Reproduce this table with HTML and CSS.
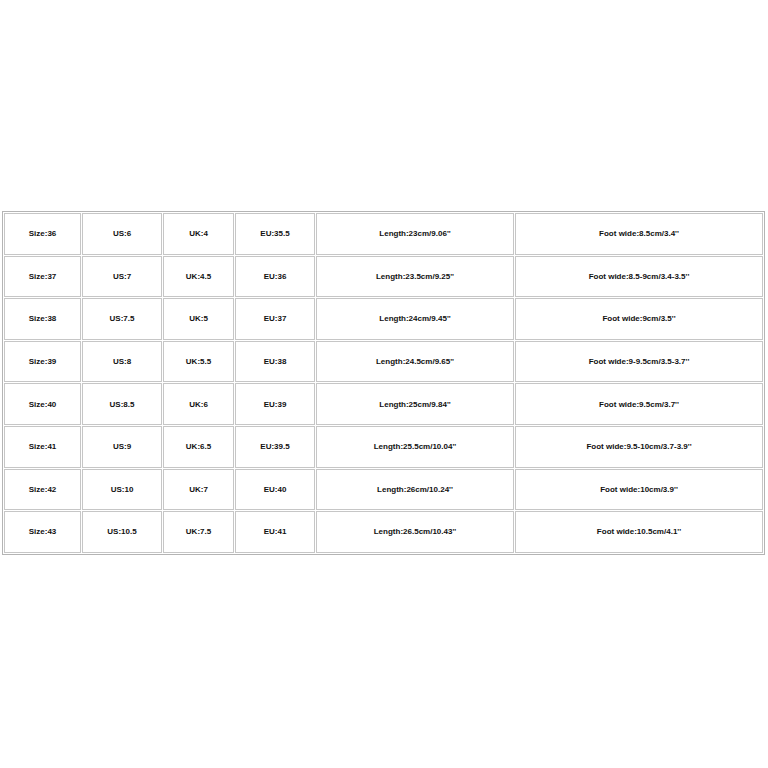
FILE: index.html
```html
<!DOCTYPE html>
<html>
<head>
<meta charset="utf-8">
<link rel="stylesheet" href="styles.css">
</head>
<body>
<table class="size-chart">
<tbody>
<tr><td class="c1">Size:36</td><td class="c2">US:6</td><td class="c3">UK:4</td><td class="c4">EU:35.5</td><td class="c5">Length:23cm/9.06''</td><td class="c6">Foot wide:8.5cm/3.4''</td></tr>
<tr><td class="c1">Size:37</td><td class="c2">US:7</td><td class="c3">UK:4.5</td><td class="c4">EU:36</td><td class="c5">Length:23.5cm/9.25''</td><td class="c6">Foot wide:8.5-9cm/3.4-3.5''</td></tr>
<tr><td class="c1">Size:38</td><td class="c2">US:7.5</td><td class="c3">UK:5</td><td class="c4">EU:37</td><td class="c5">Length:24cm/9.45''</td><td class="c6">Foot wide:9cm/3.5''</td></tr>
<tr><td class="c1">Size:39</td><td class="c2">US:8</td><td class="c3">UK:5.5</td><td class="c4">EU:38</td><td class="c5">Length:24.5cm/9.65''</td><td class="c6">Foot wide:9-9.5cm/3.5-3.7''</td></tr>
<tr><td class="c1">Size:40</td><td class="c2">US:8.5</td><td class="c3">UK:6</td><td class="c4">EU:39</td><td class="c5">Length:25cm/9.84''</td><td class="c6">Foot wide:9.5cm/3.7''</td></tr>
<tr><td class="c1">Size:41</td><td class="c2">US:9</td><td class="c3">UK:6.5</td><td class="c4">EU:39.5</td><td class="c5">Length:25.5cm/10.04''</td><td class="c6">Foot wide:9.5-10cm/3.7-3.9''</td></tr>
<tr><td class="c1">Size:42</td><td class="c2">US:10</td><td class="c3">UK:7</td><td class="c4">EU:40</td><td class="c5">Length:26cm/10.24''</td><td class="c6">Foot wide:10cm/3.9''</td></tr>
<tr><td class="c1">Size:43</td><td class="c2">US:10.5</td><td class="c3">UK:7.5</td><td class="c4">EU:41</td><td class="c5">Length:26.5cm/10.43''</td><td class="c6">Foot wide:10.5cm/4.1''</td></tr>
</tbody>
</table>
</body>
</html>
```
FILE: styles.css
```css
html, body {
  margin: 0;
  padding: 0;
  background: #ffffff;
}
body {
  font-family: "Liberation Sans", Arial, sans-serif;
}
.size-chart {
  margin: 211px 0 0 2px;
  width: 763px;
  table-layout: fixed;
  border-collapse: separate;
  border-spacing: 1px;
  border: 1px solid #b4b4b4;
}
.size-chart td {
  box-sizing: border-box;
  height: 41.6px;
  padding: 0;
  border: 1px solid #c6c6c6;
  text-align: center;
  vertical-align: middle;
  font-size: 8px;
  font-weight: bold;
  color: #111111;
  white-space: nowrap;
}
.size-chart .c1 { width: 77px; }
.size-chart .c2 { width: 80px; }
.size-chart .c3 { width: 71px; }
.size-chart .c4 { width: 80px; }
.size-chart .c5 { width: 198px; }
.size-chart .c6 { width: 248px; }
```
